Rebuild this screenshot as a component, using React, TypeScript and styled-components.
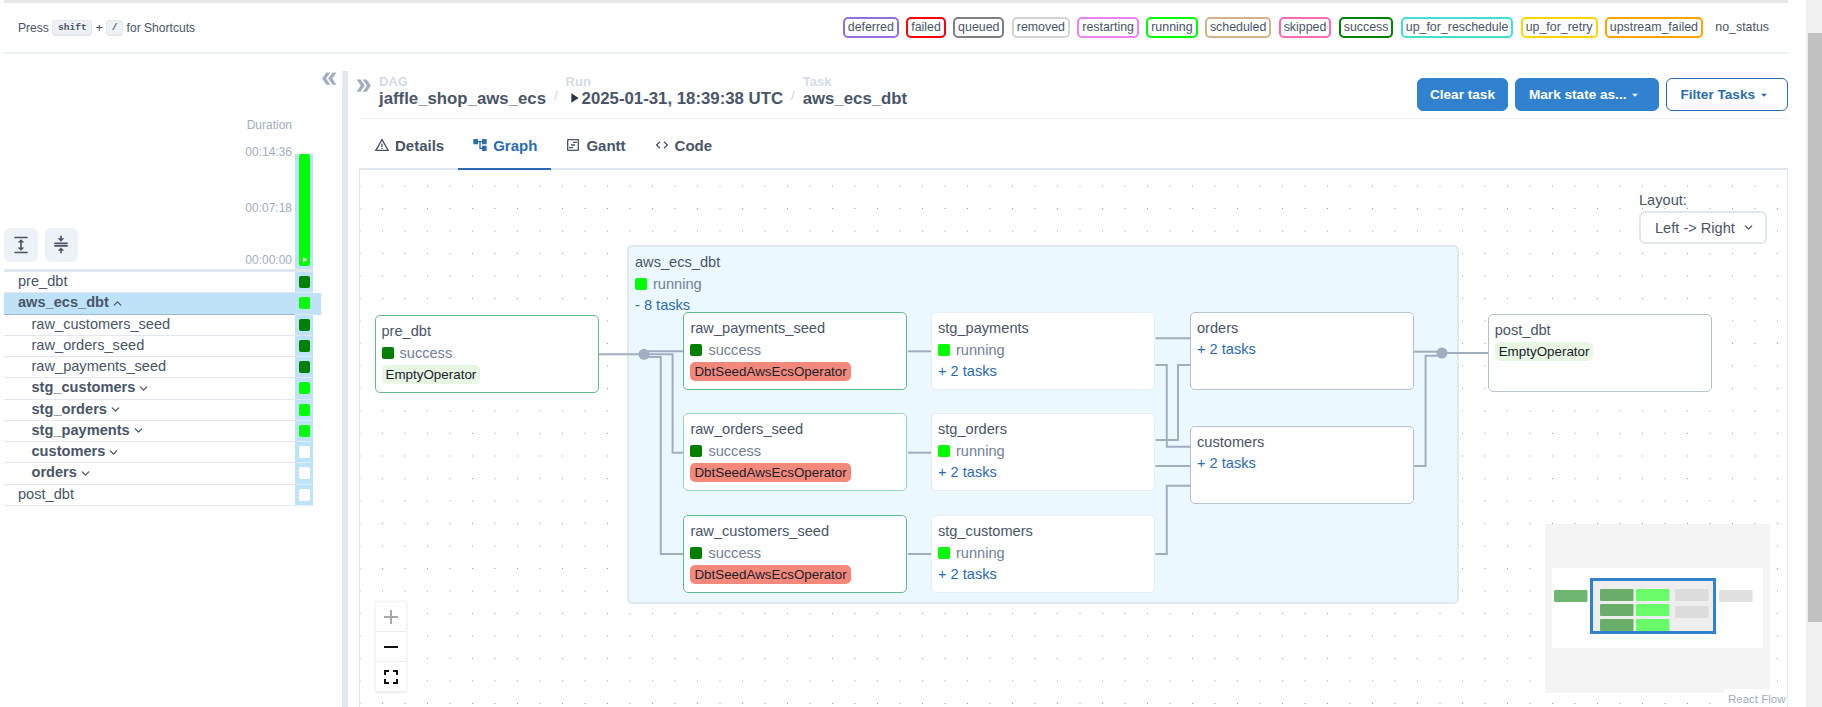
import React from 'react';
import styled, { createGlobalStyle } from 'styled-components';
import {
  MdAccountTree,
  MdAdd,
  MdArrowDropDown,
  MdCompress,
  MdDoubleArrow,
  MdExpand,
  MdFullscreen,
  MdOutlineViewTimeline,
  MdPlayArrow,
  MdRemove,
  MdWarningAmber,
} from 'react-icons/md';
import { BiCode } from 'react-icons/bi';
import { FiChevronDown, FiChevronUp } from 'react-icons/fi';

const GlobalStyle = createGlobalStyle`
  html, body {
    margin: 0;
    height: 100%;
    overflow: hidden;
    background: #fff;
  }
  body, button {
    font-family: "Liberation Sans", Arial, sans-serif;
    color: #4a5568;
  }
  * {
    box-sizing: border-box;
  }
`;

const STATES = [
  ['deferred', '#9370db'],
  ['failed', '#ff0000'],
  ['queued', '#808080'],
  ['removed', '#d3d3d3'],
  ['restarting', '#ee82ee'],
  ['running', '#00ff00'],
  ['scheduled', '#d2b48c'],
  ['skipped', '#ff69b4'],
  ['success', '#008000'],
  ['up_for_reschedule', '#40e0d0'],
  ['up_for_retry', '#ffd700'],
  ['upstream_failed', '#ffa500'],
  ['no_status', '#ffffff'],
];

const GREEN = '#008000';
const LIME = '#00ff00';

const TASKS = [
  { name: 'pre_dbt', level: 0, color: GREEN },
  { name: 'aws_ecs_dbt', level: 0, color: LIME, group: true, open: true, selected: true },
  { name: 'raw_customers_seed', level: 1, color: GREEN },
  { name: 'raw_orders_seed', level: 1, color: GREEN },
  { name: 'raw_payments_seed', level: 1, color: GREEN },
  { name: 'stg_customers', level: 1, color: LIME, group: true },
  { name: 'stg_orders', level: 1, color: LIME, group: true },
  { name: 'stg_payments', level: 1, color: LIME, group: true },
  { name: 'customers', level: 1, color: '#fff', group: true },
  { name: 'orders', level: 1, color: '#fff', group: true },
  { name: 'post_dbt', level: 0, color: '#fff' },
];

const EDGES = [
  'M599 354.3H644',
  'M644 351.3H684',
  'M644 354.3H672.6V452.7H684',
  'M644 357H660.8V554H684',
  'M908 351.3H932',
  'M908 452.7H932',
  'M908 554H932',
  'M1155.5 338.3H1190',
  'M1155.5 365H1166.8V446.7H1190',
  'M1155.5 440H1178V365H1190',
  'M1155.5 466H1190',
  'M1155.5 554H1166.8V485.7H1190',
  'M1414 351.7H1442',
  'M1414 466H1425.6V355.7H1442',
  'M1442 353H1488',
];

const NODES = [
  { name: 'pre_dbt', x: 14.5, y: 145, state: 'success', op: 'EmptyOperator', border: '#63bb86' },
  { name: 'raw_payments_seed', x: 323.4, y: 142.3, state: 'success', op: 'DbtSeedAwsEcsOperator', border: '#63bb86' },
  { name: 'raw_orders_seed', x: 323.4, y: 243.3, state: 'success', op: 'DbtSeedAwsEcsOperator', border: '#96d6b0' },
  { name: 'raw_customers_seed', x: 323.4, y: 345, state: 'success', op: 'DbtSeedAwsEcsOperator', border: '#63bb86' },
  { name: 'stg_payments', x: 571, y: 142.3, state: 'running', tasks: '+ 2 tasks', border: '#e6eef6' },
  { name: 'stg_orders', x: 571, y: 243.3, state: 'running', tasks: '+ 2 tasks', border: '#e6eef6' },
  { name: 'stg_customers', x: 571, y: 345, state: 'running', tasks: '+ 2 tasks', border: '#e6eef6' },
  { name: 'orders', x: 830, y: 142.3, tasks: '+ 2 tasks', border: '#b5c2d3' },
  { name: 'customers', x: 830, y: 256.4, tasks: '+ 2 tasks', border: '#b5c2d3' },
  { name: 'post_dbt', x: 1127.7, y: 144.3, op: 'EmptyOperator', border: '#b5c2d3' },
];

const MINI_NODES = [
  [1554, 590, '#6fb770'],
  [1600, 589, '#68ae68'],
  [1600, 604, '#68ae68'],
  [1600, 619, '#68ae68'],
  [1636, 589, '#69fd69'],
  [1636, 604, '#69fd69'],
  [1636, 619, '#69fd69'],
  [1675, 589, '#dcdcdc'],
  [1675, 606, '#dcdcdc'],
  [1719, 590, '#e0e0e0'],
] as const;

const Page = styled.div`
  display: flex;
  width: 1822px;
  height: 707px;
  overflow: hidden;
`;

const Main = styled.div`
  width: 1806px;
  height: 707px;
  padding: 0 18px 0 4px;
  display: flex;
  flex-direction: column;
`;

const Track = styled.div`
  width: 16px;
  height: 707px;
  background: #f1f1f1;
  padding: 33px 0 85px 2px;
`;

const Thumb = styled.div`
  height: 100%;
  background: #c1c1c1;
`;

const TopStrip = styled.div`
  height: 3px;
  background: #e8e8e8;
  flex: none;
`;

const LegendBar = styled.div`
  height: 51px;
  flex: none;
  border-bottom: 2px solid #edf2f7;
  display: flex;
  align-items: center;
  justify-content: space-between;
  padding: 0 14px 0 14px;
  font-size: 12px;
`;

const Hint = styled.div`
  display: flex;
  align-items: center;
  gap: 3.5px;
  font-size: 12.1px;
`;

const Kbd = styled.span`
  font-family: "Liberation Mono", monospace;
  font-weight: 700;
  font-size: 9.6px;
  line-height: 13px;
  background: #edf2f7;
  border: 1px solid #e2e8f0;
  border-bottom-width: 2px;
  border-radius: 4px;
  padding: 0 4.5px;
`;

const Legend = styled.div`
  display: flex;
  gap: 7.3px;
  font-size: 12.4px;
`;

const Pill = styled.span<{ $color: string }>`
  height: 21px;
  line-height: 17px;
  padding: 0 3px;
  border: 2px solid ${(p) => p.$color};
  border-radius: 5px;
`;

const Body = styled.div`
  flex: 1;
  display: flex;
  padding-top: 17px;
  min-height: 0;
`;

const LeftPanel = styled.div`
  width: 338px;
  flex: none;
  display: flex;
  flex-direction: column;
`;

const CollapseRow = styled.div`
  height: 45px;
  padding-right: 2px;
  display: flex;
  justify-content: flex-end;
  font-size: 21px;
  color: #a0aec0;
  svg {
    display: block;
    margin-top: -3px;
    transform: rotate(180deg);
  }
`;

const DurationLabel = styled.div`
  width: 288px;
  height: 18px;
  line-height: 18px;
  text-align: right;
  font-size: 12px;
  color: #a0aec0;
`;

const ChartRow = styled.div`
  width: 309px;
  height: 135px;
  display: flex;
  align-items: flex-end;
  border-bottom: 0;
`;

const ToolButtons = styled.div`
  display: flex;
  gap: 7px;
  margin: 0 auto 7px 0;
`;

const ToolButton = styled.button`
  width: 33.5px;
  height: 34px;
  padding: 0;
  border: 0;
  border-radius: 6px;
  background: #edf2f7;
  display: flex;
  align-items: center;
  justify-content: center;
  color: #4a5568;
  font-size: 20px;
`;

const Axis = styled.div`
  height: 135px;
  padding-top: 9px;
  margin-right: 3px;
  font-size: 12px;
  color: #a0aec0;
  text-align: right;
`;

const Tick = styled.div<{ $gap: number }>`
  height: 18px;
  line-height: 18px;
  margin-bottom: ${(p) => p.$gap}px;
`;

const BarCell = styled.div`
  width: 18px;
  height: 115px;
  background: #bee3f8;
  padding: 0 3px 3px 4px;
`;

const Bar = styled.div`
  position: relative;
  height: 100%;
  background: #00ff00;
  border-radius: 2px;
  color: #fff;
  font-size: 7px;
  svg {
    position: absolute;
    left: 1px;
    bottom: 2px;
    width: 9px;
    height: 9px;
  }
`;

const Rule = styled.div`
  width: 309px;
  height: 3px;
  background: #dfe7f0;
  flex: none;
`;

const Row = styled.div<{ $selected?: boolean }>`
  width: ${(p) => (p.$selected ? 317 : 309)}px;
  height: 21.25px;
  display: flex;
  align-items: stretch;
  font-size: 14.6px;
  background: ${(p) => (p.$selected ? '#bee3f8' : 'transparent')};
`;

const RowName = styled.div<{ $level: number; $bold?: boolean; $selected?: boolean }>`
  width: 291px;
  flex: none;
  display: flex;
  align-items: center;
  gap: 2px;
  padding: 0 0 2px ${(p) => 14 + p.$level * 13.5}px;
  font-weight: ${(p) => (p.$bold ? 700 : 400)};
  border-bottom: 1px solid ${(p) => (p.$selected ? '#a0b6c9' : '#e2e8f0')};
  svg {
    font-size: 13px;
    stroke-width: 2.4;
    margin-top: 2px;
  }
`;

const RowCell = styled.div`
  width: 18px;
  flex: none;
  padding-left: 4px;
  background: #bee3f8;
  display: flex;
  align-items: center;
  border-bottom: 1px solid #e2e8f0;
`;

const Square = styled.span<{ $color: string }>`
  display: block;
  width: 11px;
  height: 12px;
  border-radius: 2px;
  background: ${(p) => p.$color};
`;

const Divider = styled.div`
  width: 6px;
  flex: none;
  background: #e2e8f0;
`;

const RightPanel = styled.div`
  position: relative;
  flex: 1;
  min-width: 0;
  padding-left: 11px;
  display: flex;
  flex-direction: column;
`;

const ExpandToggle = styled.span`
  position: absolute;
  left: 5px;
  top: 4px;
  font-size: 21px;
  color: #a0aec0;
  svg {
    display: block;
  }
`;

const Header = styled.div`
  height: 48px;
  flex: none;
  padding: 4px 0 0 20px;
  border-bottom: 1px solid #edf2f7;
  display: flex;
  justify-content: space-between;
`;

const Crumbs = styled.div`
  display: flex;
`;

const Crumb = styled.div`
  display: flex;
  flex-direction: column;
`;

const CrumbLabel = styled.span`
  height: 14px;
  line-height: 14px;
  font-size: 13px;
  font-weight: 700;
  color: #d3dce6;
`;

const CrumbValue = styled.span`
  height: 20px;
  line-height: 20px;
  font-size: 16.8px;
  font-weight: 700;
  white-space: nowrap;
  display: flex;
  align-items: center;
  svg {
    margin: -2px 0 0 0;
    font-size: 16px;
    color: #2d3748;
  }
`;

const Slash = styled.span`
  margin: 13px 8px 0;
  font-size: 13px;
  line-height: 16px;
  color: #cbd5e0;
`;

const Actions = styled.div`
  display: flex;
  gap: 7px;
  padding-top: 3px;
`;

const ActionButton = styled.button<{ $outline?: boolean }>`
  height: 33px;
  padding: 0 13px;
  border: 1px solid #2b6cb0;
  border-color: ${(p) => (p.$outline ? '#2b6cb0' : '#3182ce')};
  border-radius: 6px;
  background: ${(p) => (p.$outline ? '#fff' : '#3182ce')};
  color: ${(p) => (p.$outline ? '#2b6cb0' : '#fff')};
  font-size: 13.6px;
  font-weight: 700;
  display: flex;
  align-items: center;
  white-space: nowrap;
  &:first-child {
    padding: 0 12px;
  }
  svg {
    font-size: 14px;
    margin: 0 3px 0 2px;
  }
`;

const Tabs = styled.div`
  height: 51px;
  flex: none;
  display: flex;
  padding-left: 1px;
  border-bottom: 2px solid #e2e8f0;
`;

const Tab = styled.div<{ $active?: boolean }>`
  height: 51px;
  padding: 3px 14px 0;
  display: flex;
  align-items: center;
  gap: 5px;
  font-size: 15px;
  font-weight: 700;
  color: ${(p) => (p.$active ? '#2b6cb0' : '#4a5568')};
  border-bottom: 2px solid ${(p) => (p.$active ? '#2b6cb0' : 'transparent')};
  svg {
    font-size: 16px;
  }
`;

const Canvas = styled.div`
  position: relative;
  flex: 1;
  min-height: 0;
  overflow: hidden;
  border-left: 1px solid #e2e8f0;
  border-right: 1px solid #e2e8f0;
  background-image: radial-gradient(circle, #9a9aa3 0.7px, transparent 0.9px);
  background-size: 22.5px 22.5px;
  background-position: -11.25px 4.75px;
`;

const Group = styled.div`
  position: absolute;
  left: 267px;
  top: 75px;
  width: 832px;
  height: 359px;
  padding: 4px 6px;
  background: #ebf8ff;
  border: 2px solid #e2e8f0;
  border-radius: 5px;
`;

const EdgeLayer = styled.svg`
  position: absolute;
  left: 0;
  top: 0;
`;

const FlowNode = styled.div<{ $x: number; $y: number; $border: string }>`
  position: absolute;
  left: ${(p) => p.$x}px;
  top: ${(p) => p.$y}px;
  width: 224px;
  height: 78px;
  padding: 4px 6px;
  background: #fff;
  border: 1px solid ${(p) => p.$border};
  border-radius: 5px;
`;

const NodeLine = styled.div`
  height: 22px;
  line-height: 22px;
  font-size: 14.6px;
  white-space: nowrap;
`;

const StatusLine = styled(NodeLine)`
  display: flex;
  align-items: center;
  gap: 6px;
  color: #718096;
`;

const StatusSquare = styled.span<{ $color: string }>`
  width: 12px;
  height: 12px;
  border-radius: 2px;
  background: ${(p) => p.$color};
`;

const TasksLine = styled(NodeLine)`
  margin-top: -1px;
  color: #2b6cb0;
`;

const OperatorTag = styled.span<{ $color: string }>`
  display: inline-block;
  height: 19px;
  line-height: 19px;
  padding: 0 4px;
  margin-top: 1px;
  vertical-align: top;
  border-radius: 5px;
  font-size: 13.4px;
  color: #1a202c;
  background: ${(p) => p.$color};
`;

const LayoutControl = styled.div`
  position: absolute;
  left: 1279px;
  top: 20px;
  width: 128px;
  font-size: 14.6px;
`;

const LayoutLabel = styled.div`
  height: 21px;
  line-height: 21px;
`;

const LayoutSelect = styled.div`
  height: 33px;
  padding: 0 10px 0 14px;
  border: 2px solid #e2e8f0;
  border-radius: 6px;
  background: #fff;
  display: flex;
  align-items: center;
  justify-content: space-between;
  svg {
    font-size: 13px;
    stroke-width: 2.5;
  }
`;

const Controls = styled.div`
  position: absolute;
  left: 16px;
  bottom: 15px;
  box-shadow: 0 0 2px 1px rgba(0, 0, 0, 0.08);
`;

const ControlButton = styled.div<{ $muted?: boolean }>`
  width: 30px;
  height: 30px;
  display: flex;
  align-items: center;
  justify-content: center;
  background: #fff;
  border-bottom: 1px solid #eee;
  color: ${(p) => (p.$muted ? '#a8a8a8' : '#111')};
  font-size: 24px;
`;

const MiniMapSvg = styled.svg`
  position: absolute;
  right: 17px;
  bottom: 14px;
`;

const Attribution = styled.div`
  position: absolute;
  right: 0;
  bottom: 0;
  width: 63px;
  height: 18px;
  padding-left: 4px;
  line-height: 20px;
  font-size: 11.5px;
  background: #fff;
  color: #a0aec0;
  white-space: nowrap;
`;

const statusColor = (state?: string) => (state === 'success' ? GREEN : LIME);

const MiniMap = () => (
  <MiniMapSvg width={225} height={169} viewBox="1545 524 225 169">
    <rect x={1545} y={524} width={225} height={169} fill="#f4f4f4" />
    <rect x={1552} y={568} width={211} height={80} fill="#fff" />
    <rect x={1591.5} y={579.5} width={123} height={53} fill="#eee" stroke="#3182ce" strokeWidth={3} />
    {MINI_NODES.map(([x, y, fill]) => (
      <rect key={`${x}-${y}`} x={x} y={y} width={33.5} height={12} rx={1} fill={fill} />
    ))}
  </MiniMapSvg>
);

const App = () => (
  <Page>
    <GlobalStyle />
    <Main>
      <TopStrip />
      <LegendBar>
        <Hint>
          Press <Kbd>shift</Kbd> + <Kbd>/</Kbd> for Shortcuts
        </Hint>
        <Legend>
          {STATES.map(([name, color]) => (
            <Pill key={name} $color={color}>
              {name}
            </Pill>
          ))}
        </Legend>
      </LegendBar>
      <Body>
        <LeftPanel>
          <CollapseRow>
            <MdDoubleArrow />
          </CollapseRow>
          <DurationLabel>Duration</DurationLabel>
          <ChartRow>
            <ToolButtons>
              <ToolButton>
                <MdExpand />
              </ToolButton>
              <ToolButton>
                <MdCompress />
              </ToolButton>
            </ToolButtons>
            <Axis>
              <Tick $gap={38}>00:14:36</Tick>
              <Tick $gap={34}>00:07:18</Tick>
              <Tick $gap={0}>00:00:00</Tick>
            </Axis>
            <BarCell>
              <Bar>
                <MdPlayArrow />
              </Bar>
            </BarCell>
          </ChartRow>
          <Rule />
          {TASKS.map((task) => (
            <Row key={task.name} $selected={task.selected}>
              <RowName $level={task.level} $bold={task.group} $selected={task.selected}>
                {task.name}
                {task.group && (task.open ? <FiChevronUp /> : <FiChevronDown />)}
              </RowName>
              <RowCell>
                <Square $color={task.color} />
              </RowCell>
            </Row>
          ))}
        </LeftPanel>
        <Divider />
        <RightPanel>
          <ExpandToggle>
            <MdDoubleArrow />
          </ExpandToggle>
          <Header>
            <Crumbs>
              <Crumb>
                <CrumbLabel>DAG</CrumbLabel>
                <CrumbValue>jaffle_shop_aws_ecs</CrumbValue>
              </Crumb>
              <Slash>/</Slash>
              <Crumb>
                <CrumbLabel>Run</CrumbLabel>
                <CrumbValue>
                  <MdPlayArrow />
                  2025-01-31, 18:39:38 UTC
                </CrumbValue>
              </Crumb>
              <Slash>/</Slash>
              <Crumb>
                <CrumbLabel>Task</CrumbLabel>
                <CrumbValue>aws_ecs_dbt</CrumbValue>
              </Crumb>
            </Crumbs>
            <Actions>
              <ActionButton>Clear task</ActionButton>
              <ActionButton>
                Mark state as...
                <MdArrowDropDown />
              </ActionButton>
              <ActionButton $outline>
                Filter Tasks
                <MdArrowDropDown />
              </ActionButton>
            </Actions>
          </Header>
          <Tabs>
            <Tab>
              <MdWarningAmber />
              Details
            </Tab>
            <Tab $active>
              <MdAccountTree />
              Graph
            </Tab>
            <Tab>
              <MdOutlineViewTimeline />
              Gantt
            </Tab>
            <Tab>
              <BiCode />
              Code
            </Tab>
          </Tabs>
          <Canvas>
            <Group>
              <NodeLine>aws_ecs_dbt</NodeLine>
              <StatusLine>
                <StatusSquare $color={LIME} />
                running
              </StatusLine>
              <TasksLine>- 8 tasks</TasksLine>
            </Group>
            <EdgeLayer width={1427} height={537} viewBox="360 170 1427 537">
              {EDGES.map((d) => (
                <path key={d} d={d} fill="none" stroke="#a0aec0" strokeWidth={2} />
              ))}
              <circle cx={644} cy={354.3} r={5.5} fill="#a0aec0" />
              <circle cx={1442} cy={353} r={5.5} fill="#a0aec0" />
            </EdgeLayer>
            {NODES.map((node) => (
              <FlowNode key={node.name} $x={node.x} $y={node.y} $border={node.border}>
                <NodeLine>{node.name}</NodeLine>
                {node.state && (
                  <StatusLine>
                    <StatusSquare $color={statusColor(node.state)} />
                    {node.state}
                  </StatusLine>
                )}
                {node.tasks && <TasksLine>{node.tasks}</TasksLine>}
                {node.op && (
                  <NodeLine>
                    <OperatorTag $color={node.op === 'EmptyOperator' ? '#e8f7e4' : '#f4897b'}>{node.op}</OperatorTag>
                  </NodeLine>
                )}
              </FlowNode>
            ))}
            <LayoutControl>
              <LayoutLabel>Layout:</LayoutLabel>
              <LayoutSelect>
                Left -&gt; Right
                <FiChevronDown />
              </LayoutSelect>
            </LayoutControl>
            <Controls>
              <ControlButton $muted>
                <MdAdd />
              </ControlButton>
              <ControlButton>
                <MdRemove />
              </ControlButton>
              <ControlButton>
                <MdFullscreen />
              </ControlButton>
            </Controls>
            <MiniMap />
            <Attribution>React Flow</Attribution>
          </Canvas>
        </RightPanel>
      </Body>
    </Main>
    <Track>
      <Thumb />
    </Track>
  </Page>
);

export default App;
